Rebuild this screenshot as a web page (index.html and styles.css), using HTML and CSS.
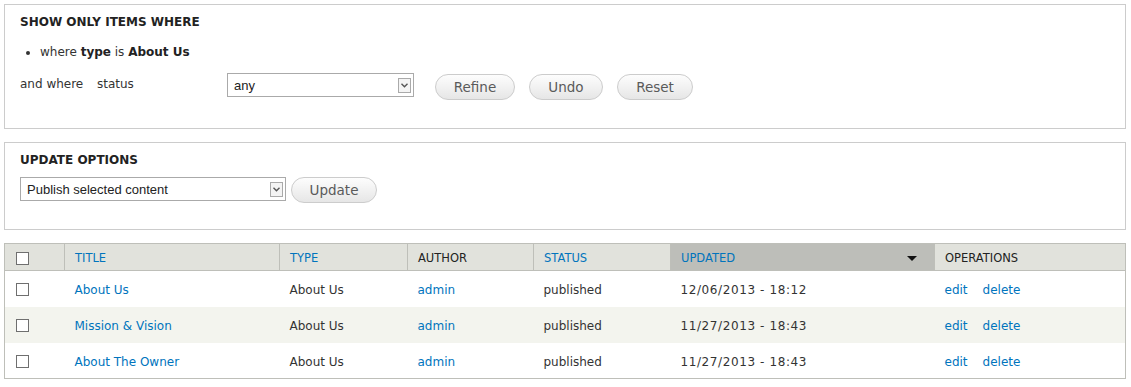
FILE: index.html
```html
<!DOCTYPE html>
<html lang="en">
<head>
    <meta charset="UTF-8">
    <title>Content</title>
    <link rel="stylesheet" href="styles.css">
</head>
<body>
    <div class="fieldset filters">
        <div class="fieldset-title">Show only items where</div>
        <ul class="current-filters">
            <li>where <strong>type</strong> is <strong>About Us</strong></li>
        </ul>
        <div class="filter-row">
            <span class="and-where">and where</span>
            <span class="filter-label">status</span>
            <div class="select select-status">
                <span class="select-value">any</span>
                <span class="select-arrow"><svg width="7" height="5" viewBox="0 0 7 5"><path d="M0.5 0.8 L3.5 3.8 L6.5 0.8" fill="none" stroke="#555" stroke-width="1.4"/></svg></span>
            </div>
            <div class="buttons">
                <button class="button refine">Refine</button>
                <button class="button undo">Undo</button>
                <button class="button reset">Reset</button>
            </div>
        </div>
    </div>

    <div class="fieldset update">
        <div class="fieldset-title">Update options</div>
        <div class="update-row">
            <div class="select select-op">
                <span class="select-value">Publish selected content</span>
                <span class="select-arrow"><svg width="7" height="5" viewBox="0 0 7 5"><path d="M0.5 0.8 L3.5 3.8 L6.5 0.8" fill="none" stroke="#555" stroke-width="1.4"/></svg></span>
            </div>
            <button class="button update-btn">Update</button>
        </div>
    </div>

    <table class="content-table">
        <thead>
            <tr>
                <th class="col-check"><span class="checkbox"></span></th>
                <th class="col-title"><a href="#">Title</a></th>
                <th class="col-type"><a href="#">Type</a></th>
                <th class="col-author">Author</th>
                <th class="col-status"><a href="#">Status</a></th>
                <th class="col-updated active"><a href="#">Updated</a><span class="sort-arrow"></span></th>
                <th class="col-ops">Operations</th>
            </tr>
        </thead>
        <tbody>
            <tr>
                <td><span class="checkbox"></span></td>
                <td><a href="#">About Us</a></td>
                <td>About Us</td>
                <td><a href="#">admin</a></td>
                <td>published</td>
                <td class="date">12/06/2013 - 18:12</td>
                <td><a href="#" class="op">edit</a><a href="#">delete</a></td>
            </tr>
            <tr class="even">
                <td><span class="checkbox"></span></td>
                <td><a href="#">Mission &amp; Vision</a></td>
                <td>About Us</td>
                <td><a href="#">admin</a></td>
                <td>published</td>
                <td class="date">11/27/2013 - 18:43</td>
                <td><a href="#" class="op">edit</a><a href="#">delete</a></td>
            </tr>
            <tr>
                <td><span class="checkbox"></span></td>
                <td><a href="#">About The Owner</a></td>
                <td>About Us</td>
                <td><a href="#">admin</a></td>
                <td>published</td>
                <td class="date">11/27/2013 - 18:43</td>
                <td><a href="#" class="op">edit</a><a href="#">delete</a></td>
            </tr>
        </tbody>
    </table>
</body>
</html>
```

FILE: styles.css
```css
body {
    margin: 4px 5px 4px 4px;
    font-family: "DejaVu Sans", Verdana, sans-serif;
    font-size: 12px;
    color: #333;
    background: #fff;
}
a {
    color: #0074bd;
    text-decoration: none;
}
.fieldset {
    border: 1px solid #ccc;
    padding: 0 15px;
    box-sizing: border-box;
}
.filters {
    height: 125px;
    padding-top: 9px;
}
.update {
    height: 88px;
    margin-top: 13px;
    padding-top: 9px;
}
.fieldset-title {
    font-size: 12px;
    font-weight: bold;
    text-transform: uppercase;
    line-height: 16px;
    color: #222;
}
.current-filters {
    margin: 14px 0 0;
    padding: 0 0 0 20px;
    line-height: 16px;
    color: #333;
}
.current-filters strong {
    color: #222;
}
.filter-row {
    display: flex;
    align-items: flex-start;
    margin-top: 13px;
}
.and-where {
    margin-top: 4px;
    width: 77px;
}
.filter-label {
    margin-top: 4px;
    width: 130px;
}
.select {
    display: flex;
    align-items: center;
    justify-content: space-between;
    height: 24px;
    border: 1px solid #aaa;
    box-sizing: border-box;
    background: #fff;
    font-family: "Liberation Sans", Arial, sans-serif;
    font-size: 13px;
    color: #222;
    padding: 0 2px 0 6px;
}
.select-status {
    width: 187px;
}
.select-op {
    width: 266px;
}
.select-arrow {
    width: 13px;
    height: 15px;
    border: 1px solid #aaa;
    box-sizing: border-box;
    background: #f4f4f4;
    display: flex;
    align-items: center;
    justify-content: center;
}
.buttons {
    display: flex;
    gap: 14px;
    margin-left: 21px;
    margin-top: 1px;
}
.button {
    height: 26px;
    border: 1px solid #ccc;
    border-radius: 20px;
    background: linear-gradient(#fdfdfd, #e6e6e6);
    color: #5a5a5a;
    font-family: "DejaVu Sans", Verdana, sans-serif;
    font-size: 13.5px;
    padding: 0 10px;
    cursor: pointer;
}
.refine { width: 80px; }
.undo { width: 74px; }
.reset { width: 76px; }
.update-row {
    display: flex;
    align-items: flex-start;
    gap: 5px;
    margin-top: 9px;
}
.update-btn {
    width: 86px;
}
.content-table {
    margin-top: 13px;
    width: 100%;
    border-collapse: collapse;
    border: 1px solid #bebfb9;
}
.content-table th {
    background: #e1e2dc;
    height: 27px;
    padding: 1px 10px 0;
    text-align: left;
    font-weight: normal;
    text-transform: uppercase;
    font-size: 11.5px;
    border-left: 1px solid #bebfb9;
    border-bottom: 1px solid #bebfb9;
    color: #222;
    box-sizing: border-box;
}
.content-table th.active {
    background: #bdbeb9;
    position: relative;
}
.sort-arrow {
    position: absolute;
    right: 17px;
    top: 12px;
    border-left: 5px solid transparent;
    border-right: 5px solid transparent;
    border-top: 5px solid #111;
}
.content-table td {
    height: 36px;
    padding: 3px 10px 0;
    font-size: 12px;
    box-sizing: border-box;
}
.content-table td.date {
    letter-spacing: 0.6px;
}
.content-table tr.even td {
    background: #f3f4ee;
}
.content-table th.col-check,
.content-table td:first-child {
    padding-left: 11px;
    padding-top: 0;
    width: 60px;
}
.col-title { width: 215px; }
.col-type { width: 128px; }
.col-author { width: 126px; }
.col-status { width: 137px; }
.col-updated { width: 264px; }
.checkbox {
    display: inline-block;
    width: 11px;
    height: 11px;
    border: 1px solid #6f6f6f;
    background: #fff;
    vertical-align: middle;
    margin-top: 2px;
}
.op {
    margin-right: 15px;
}
```
